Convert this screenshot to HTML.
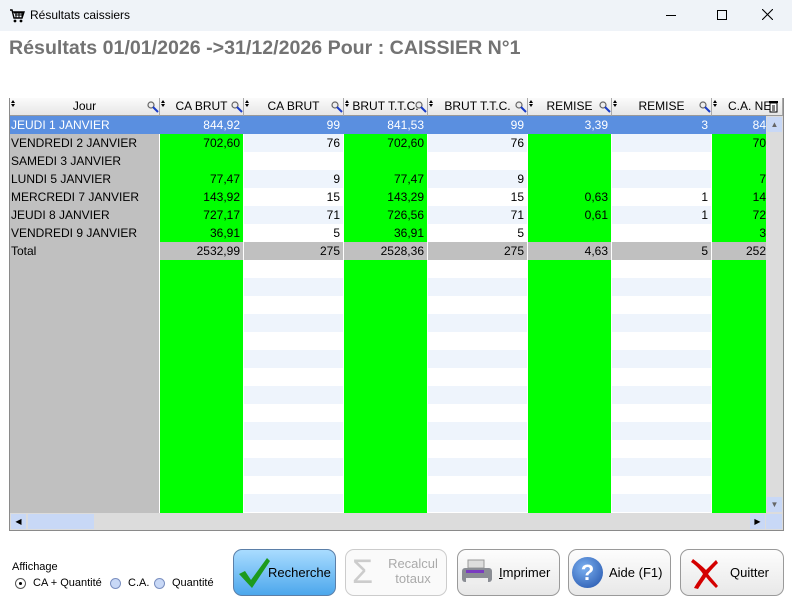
<!DOCTYPE html>
<html><head><meta charset="utf-8"><style>
*{margin:0;padding:0;box-sizing:border-box}
body{width:792px;height:598px;background:#fff;font-family:"Liberation Sans",Arial,sans-serif;position:relative;overflow:hidden;font-size:12px;color:#000}
.a{position:absolute}
.tb{left:0;top:0;width:792px;height:31px;background:#eff3f8}
.col{position:absolute;top:116px;height:397px}
.g{background:#00ff00}
.w{background:repeating-linear-gradient(#eef4fc 0 18px,#fff 18px 36px);background-position:0 18px}
.hd{position:absolute;top:98px;height:18px;background:linear-gradient(#fbfbfb,#e6e6e6);border-right:1px solid #aaa;border-bottom:1px solid #999;text-align:center;line-height:17px;font-size:12px}
.hd:before{content:"";position:absolute;left:1px;top:2px;width:0;height:0;border:2px solid transparent;border-bottom:3px solid #000;border-top:0}
.hd:after{content:"";position:absolute;left:1px;top:6px;width:0;height:0;border:2px solid transparent;border-top:3px solid #000;border-bottom:0}
.mg{position:absolute;top:101px;width:12px;height:12px}
.row{position:absolute;left:9px;width:757px;height:18px;line-height:18px}
.c{position:absolute;top:0;height:18px;text-align:right;padding-right:4px;white-space:nowrap;overflow:hidden}
.btn{position:absolute;top:549px;height:47px;border:1px solid #9a9a9a;border-radius:9px;background:linear-gradient(#fdfdfd,#e8e8e8);font-size:13px}
</style></head><body>
<div class="a tb"></div>
<svg class="a" style="left:9px;top:8px" width="16" height="16" viewBox="0 0 16 16"><path d="M1 2h2l2 8h8l2-6H4" fill="none" stroke="#000" stroke-width="1.4"/><path d="M5 5h9M6 7h8M7 4v6M10 4v6M13 4v6" stroke="#000" stroke-width="1"/><circle cx="6" cy="13" r="1.4"/><circle cx="12" cy="13" r="1.4"/></svg>
<div class="a" style="left:30px;top:8px;font-size:12px">Résultats caissiers</div>
<div class="a" style="left:666px;top:15px;width:10px;height:1px;background:#000"></div>
<div class="a" style="left:717px;top:10px;width:10px;height:10px;border:1px solid #000"></div>
<svg class="a" style="left:762px;top:9px" width="11" height="11"><path d="M0 0L11 11M11 0L0 11" stroke="#000" stroke-width="1.1"/></svg>
<div class="a" style="left:9px;top:37px;font-size:19.6px;font-weight:bold;color:#737373">Résultats 01/01/2026 -&gt;31/12/2026 Pour : CAISSIER N°1</div>

<div class="a" style="left:9px;top:98px;width:775px;height:433px;border:1px solid #8a8a8a;background:#fff"></div>
<div class="col" style="left:10px;width:149px;background:#c0c0c0"></div>
<div class="col g" style="left:160px;width:83px"></div>
<div class="col w" style="left:244px;width:99px"></div>
<div class="col g" style="left:344px;width:83px"></div>
<div class="col w" style="left:428px;width:99px"></div>
<div class="col g" style="left:528px;width:83px"></div>
<div class="col w" style="left:612px;width:99px"></div>
<div class="col g" style="left:712px;width:54px"></div>

<div class="hd" style="left:10px;width:150px">Jour</div>
<div class="hd" style="left:160px;width:84px">CA BRUT</div>
<div class="hd" style="left:244px;width:100px">CA BRUT</div>
<div class="hd" style="left:344px;width:84px">BRUT T.T.C.</div>
<div class="hd" style="left:428px;width:100px">BRUT T.T.C.</div>
<div class="hd" style="left:528px;width:84px">REMISE</div>
<div class="hd" style="left:612px;width:100px">REMISE</div>
<div class="hd" style="left:712px;width:71px;text-align:left;padding-left:16px">C.A. NE</div>
<svg width="0" height="0" style="position:absolute"><defs><g id="m"><circle cx="4" cy="4" r="3" fill="#eee" stroke="#666" stroke-width="1.2"/><path d="M6 6l5 5" stroke="#1a3cc8" stroke-width="2"/></g></defs></svg>
<svg class="mg" style="left:147px"><use href="#m"/></svg>
<svg class="mg" style="left:231px"><use href="#m"/></svg>
<svg class="mg" style="left:331px"><use href="#m"/></svg>
<svg class="mg" style="left:415px"><use href="#m"/></svg>
<svg class="mg" style="left:515px"><use href="#m"/></svg>
<svg class="mg" style="left:599px"><use href="#m"/></svg>
<svg class="mg" style="left:699px"><use href="#m"/></svg>
<svg class="a" style="left:768px;top:100px" width="11" height="13"><rect x="1" y="1" width="9" height="2" fill="#000"/><rect x="2" y="3" width="7" height="9" fill="#fff" stroke="#000"/><path d="M4 6h3M4 8h3M4 10h3" stroke="#000"/></svg>

<div class="row" style="top:116px;background:#5a8fe0;color:#fff;left:10px"><span class="c" style="left:0;text-align:left;padding-left:1px">JEUDI 1 JANVIER</span><span class="c" style="left:150px;width:84px">844,92</span><span class="c" style="left:234px;width:100px">99</span><span class="c" style="left:334px;width:84px">841,53</span><span class="c" style="left:418px;width:100px">99</span><span class="c" style="left:518px;width:84px">3,39</span><span class="c" style="left:602px;width:100px">3</span><span class="c" style="left:702px;width:54px;padding-right:0">84</span></div>
<div class="row" style="top:134px;left:10px"><span class="c" style="left:1px;text-align:left">VENDREDI 2 JANVIER</span><span class="c" style="left:150px;width:84px">702,60</span><span class="c" style="left:234px;width:100px">76</span><span class="c" style="left:334px;width:84px">702,60</span><span class="c" style="left:418px;width:100px">76</span><span class="c" style="left:702px;width:54px;padding-right:0">70</span></div>
<div class="row" style="top:152px;left:10px"><span class="c" style="left:1px;text-align:left">SAMEDI 3 JANVIER</span></div>
<div class="row" style="top:170px;left:10px"><span class="c" style="left:1px;text-align:left">LUNDI 5 JANVIER</span><span class="c" style="left:150px;width:84px">77,47</span><span class="c" style="left:234px;width:100px">9</span><span class="c" style="left:334px;width:84px">77,47</span><span class="c" style="left:418px;width:100px">9</span><span class="c" style="left:702px;width:54px;padding-right:0">7</span></div>
<div class="row" style="top:188px;left:10px"><span class="c" style="left:1px;text-align:left">MERCREDI 7 JANVIER</span><span class="c" style="left:150px;width:84px">143,92</span><span class="c" style="left:234px;width:100px">15</span><span class="c" style="left:334px;width:84px">143,29</span><span class="c" style="left:418px;width:100px">15</span><span class="c" style="left:518px;width:84px">0,63</span><span class="c" style="left:602px;width:100px">1</span><span class="c" style="left:702px;width:54px;padding-right:0">14</span></div>
<div class="row" style="top:206px;left:10px"><span class="c" style="left:1px;text-align:left">JEUDI 8 JANVIER</span><span class="c" style="left:150px;width:84px">727,17</span><span class="c" style="left:234px;width:100px">71</span><span class="c" style="left:334px;width:84px">726,56</span><span class="c" style="left:418px;width:100px">71</span><span class="c" style="left:518px;width:84px">0,61</span><span class="c" style="left:602px;width:100px">1</span><span class="c" style="left:702px;width:54px;padding-right:0">72</span></div>
<div class="row" style="top:224px;left:10px"><span class="c" style="left:1px;text-align:left">VENDREDI 9 JANVIER</span><span class="c" style="left:150px;width:84px">36,91</span><span class="c" style="left:234px;width:100px">5</span><span class="c" style="left:334px;width:84px">36,91</span><span class="c" style="left:418px;width:100px">5</span><span class="c" style="left:702px;width:54px;padding-right:0">3</span></div>
<div class="row" style="top:242px;left:10px;background:linear-gradient(90deg,#c0c0c0 0 149px,#fff 149px 150px,#c0c0c0 150px 233px,#fff 233px 234px,#c0c0c0 234px 333px,#fff 333px 334px,#c0c0c0 334px 417px,#fff 417px 418px,#c0c0c0 418px 517px,#fff 517px 518px,#c0c0c0 518px 601px,#fff 601px 602px,#c0c0c0 602px 701px,#fff 701px 702px,#c0c0c0 702px)"><span class="c" style="left:1px;text-align:left">Total</span><span class="c" style="left:150px;width:84px">2532,99</span><span class="c" style="left:234px;width:100px">275</span><span class="c" style="left:334px;width:84px">2528,36</span><span class="c" style="left:418px;width:100px">275</span><span class="c" style="left:518px;width:84px">4,63</span><span class="c" style="left:602px;width:100px">5</span><span class="c" style="left:702px;width:54px;padding-right:0">252</span></div>

<div class="a" style="left:766px;top:116px;width:17px;height:397px;background:#dcdcdc"></div>
<div class="a" style="left:767px;top:117px;width:15px;height:15px;background:#c8d8f6;color:#666;font-size:8px;text-align:center;line-height:15px">▲</div>
<div class="a" style="left:767px;top:497px;width:15px;height:15px;background:#c8d8f6;color:#666;font-size:8px;text-align:center;line-height:15px">▼</div>
<div class="a" style="left:10px;top:513px;width:773px;height:17px;background:#dcdcdc"></div>
<div class="a" style="left:11px;top:514px;width:15px;height:15px;background:#c8d8f6;font-size:8px;text-align:center;line-height:15px">◀</div>
<div class="a" style="left:28px;top:514px;width:66px;height:15px;background:#c8d8f6"></div>
<div class="a" style="left:750px;top:514px;width:15px;height:15px;background:#c8d8f6;font-size:8px;text-align:center;line-height:15px">▶</div>
<div class="a" style="left:766px;top:514px;width:16px;height:15px;background:#c8d8f6"></div>

<div class="a" style="left:12px;top:561px;font-size:11px">Affichage</div>
<div class="a" style="left:15px;top:578px;width:11px;height:11px;border-radius:50%;border:1px solid #555;background:#fff"><div class="a" style="left:3px;top:3px;width:3px;height:3px;border-radius:50%;background:#000"></div></div>
<div class="a" style="left:33px;top:577px;font-size:11px">CA + Quantité</div>
<div class="a" style="left:110px;top:578px;width:11px;height:11px;border-radius:50%;border:1px solid #7a8fc0;background:#c8d8f6"></div>
<div class="a" style="left:128px;top:577px;font-size:11px">C.A.</div>
<div class="a" style="left:154px;top:578px;width:11px;height:11px;border-radius:50%;border:1px solid #7a8fc0;background:#c8d8f6"></div>
<div class="a" style="left:172px;top:577px;font-size:11px">Quantité</div>

<div class="btn" style="left:233px;width:103px;background:linear-gradient(#a9dcff,#4ca7ec);border-color:#5b7fa8"><svg class="a" style="left:3px;top:6px" width="34" height="34" viewBox="0 0 34 34"><path d="M2 18l6-3 6 9L30 2l3 3-18 27z" fill="#1d9a1d"/></svg><span class="a" style="left:34px;top:15px">Recherche</span></div>
<div class="btn" style="left:345px;width:102px;border-color:#ccc;background:#fafafa;color:#aaa"><span class="a" style="left:6px;top:3px;font-size:34px;color:#ccc;line-height:38px">Σ</span><span class="a" style="left:42px;top:6px;text-align:center;width:50px;line-height:15px">Recalcul<br>totaux</span></div>
<div class="btn" style="left:457px;width:103px"><svg class="a" style="left:2px;top:8px" width="34" height="30" viewBox="0 0 34 30"><rect x="8" y="2" width="16" height="8" fill="#ddd" stroke="#999"/><rect x="2" y="10" width="30" height="14" rx="3" fill="#8a8d94"/><rect x="6" y="12" width="18" height="3" fill="#7a3cc0"/><rect x="6" y="20" width="22" height="6" fill="#eee"/></svg><span class="a" style="left:41px;top:15px"><u>I</u>mprimer</span></div>
<div class="btn" style="left:568px;width:103px"><div class="a" style="left:3px;top:7px;width:31px;height:31px;border-radius:50%;background:radial-gradient(circle at 40% 35%,#7bb0f0,#1f4fa8);color:#fff;font-weight:bold;font-size:22px;text-align:center;line-height:31px">?</div><span class="a" style="left:40px;top:15px">Aide (F1)</span></div>
<div class="btn" style="left:680px;width:104px"><svg class="a" style="left:6px;top:6px" width="32" height="34" viewBox="0 0 32 34"><path d="M4 6c6 4 10 9 12 12-3 5-7 10-9 14l4 1c3-5 6-9 8-12 3 4 7 8 10 11l2-2c-3-4-7-8-10-12 3-4 7-8 10-11l-2-3c-3 3-7 7-10 10C15 10 10 6 6 3z" fill="#d40000"/></svg><span class="a" style="left:49px;top:15px">Quitter</span></div>
</body></html>
